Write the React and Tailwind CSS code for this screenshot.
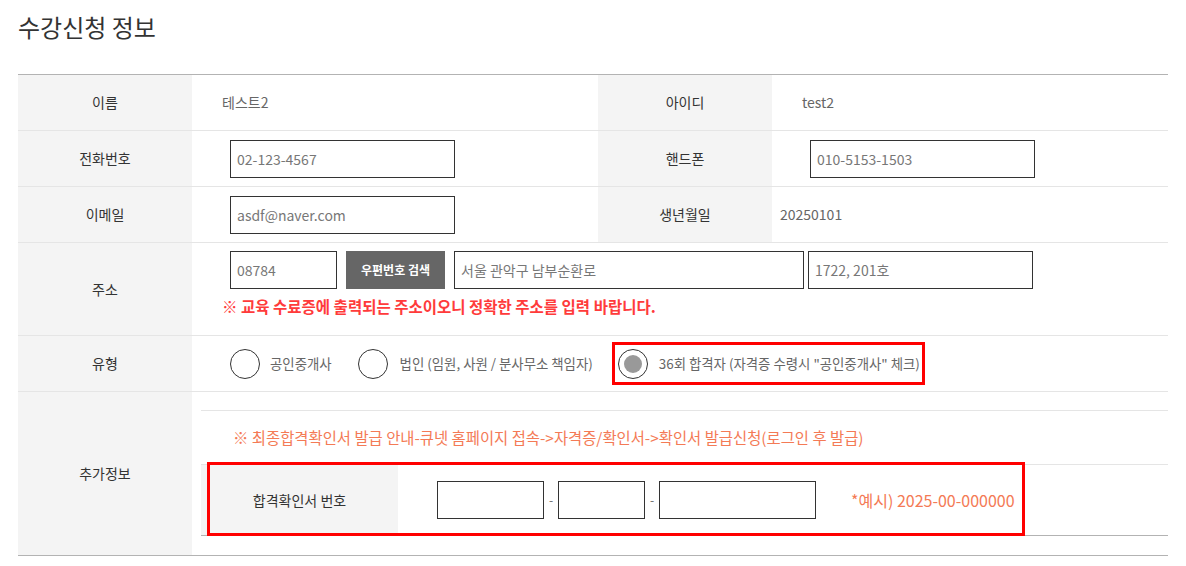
import React from "react";

const FONT = { fontFamily: '"Noto Sans CJK KR", "Noto Sans", sans-serif' };

function Label({ children, className = "" }) {
  return (
    <div
      className={
        "flex w-[174px] shrink-0 items-center justify-center bg-[#f4f4f4] text-[14px] text-[#333] " +
        className
      }
    >
      {children}
    </div>
  );
}

function Field({ value, w }) {
  return (
    <input
      readOnly
      defaultValue={value}
      className={"h-[38px] border border-[#333] bg-white px-[6px] text-[14px] text-[#777] outline-none " + w}
    />
  );
}

function Radio({ checked }) {
  return (
    <span className="flex h-[30px] w-[30px] shrink-0 items-center justify-center rounded-full border border-[#333] bg-white">
      {checked && <span className="h-[18px] w-[18px] rounded-full bg-[#999]" />}
    </span>
  );
}

export default function App() {
  return (
    <div className="min-h-screen bg-white px-[18px]" style={FONT}>
      <h2 className="pt-[11px] text-[24px] font-normal leading-[32px] text-[#333]">수강신청 정보</h2>

      <div className="mt-[31px] border-t border-[#b3b3b3]">
        {/* 이름 / 아이디 */}
        <div className="flex h-[56px] border-b border-[#e5e5e5]">
          <Label>이름</Label>
          <div className="flex w-[406px] items-center pl-[30px] text-[14px] text-[#666]">테스트2</div>
          <Label>아이디</Label>
          <div className="flex flex-1 items-center pl-[30px] text-[14px] text-[#666]">test2</div>
        </div>

        {/* 전화번호 / 핸드폰 */}
        <div className="flex h-[56px] border-b border-[#e5e5e5]">
          <Label>전화번호</Label>
          <div className="flex w-[406px] items-center pl-[38px]">
            <Field value="02-123-4567" w="w-[225px]" />
          </div>
          <Label>핸드폰</Label>
          <div className="flex flex-1 items-center pl-[38px]">
            <Field value="010-5153-1503" w="w-[225px]" />
          </div>
        </div>

        {/* 이메일 / 생년월일 */}
        <div className="flex h-[56px] border-b border-[#e5e5e5]">
          <Label>이메일</Label>
          <div className="flex w-[406px] items-center pl-[38px]">
            <Field value="asdf@naver.com" w="w-[225px]" />
          </div>
          <Label>생년월일</Label>
          <div className="flex flex-1 items-center pl-[8px] text-[14px] text-[#666]">20250101</div>
        </div>

        {/* 주소 */}
        <div className="flex h-[93px] border-b border-[#e5e5e5]">
          <Label>주소</Label>
          <div className="flex flex-1 flex-col pl-[30px] pt-[8px]">
            <div className="ml-[8px] flex items-center">
              <Field value="08784" w="w-[107px]" />
              <button className="ml-[9px] h-[38px] w-[99px] bg-[#666] text-[12px] font-bold text-white">
                우편번호 검색
              </button>
              <div className="ml-[9px]">
                <Field value="서울 관악구 남부순환로" w="w-[350px]" />
              </div>
              <div className="ml-[4px]">
                <Field value="1722, 201호" w="w-[225px]" />
              </div>
            </div>
            <p className="mt-[7px] text-[15.5px] font-bold leading-[20px] text-[#ff3b3b]">
              ※ 교육 수료증에 출력되는 주소이오니 정확한 주소를 입력 바랍니다.
            </p>
          </div>
        </div>

        {/* 유형 */}
        <div className="flex h-[56px] border-b border-[#e5e5e5]">
          <Label>유형</Label>
          <div className="flex flex-1 items-center pl-[38px] text-[13.4px] text-[#666]">
            <label className="flex items-center gap-[10px]">
              <Radio />
              <span>공인중개사</span>
            </label>
            <label className="ml-[26px] flex items-center gap-[12px]">
              <Radio />
              <span>법인 (임원, 사원 / 분사무소 책임자)</span>
            </label>
            <label className="relative ml-[25px] flex items-center gap-[11px]">
              <Radio checked />
              <span>36회 합격자 (자격증 수령시 "공인중개사" 체크)</span>
              <span className="pointer-events-none absolute -bottom-[6px] -left-[6px] -right-[5px] -top-[7px] border-[3px] border-[#ff0000]" />
            </label>
          </div>
        </div>

        {/* 추가정보 */}
        <div className="flex h-[164px] border-b border-[#b3b3b3]">
          <Label>추가정보</Label>
          <div className="flex flex-1 flex-col pl-[9px] pt-[18px]">
            <div className="border-t border-[#e5e5e5]">
              <div className="flex h-[54px] items-center border-b border-[#e5e5e5] pl-[32px] text-[15.4px] text-[#f47a55]">
                ※ 최종합격확인서 발급 안내-큐넷 홈페이지 접속-&gt;자격증/확인서-&gt;확인서 발급신청(로그인 후 발급)
              </div>
              <div className="relative flex h-[71px] border-b border-[#b3b3b3]">
                <div className="flex w-[197px] items-center justify-center bg-[#f4f4f4] text-[14px] text-[#333]">
                  합격확인서 번호
                </div>
                <div className="flex flex-1 items-center pl-[39px] text-[14px] text-[#666]">
                  <Field value="" w="w-[107px]" />
                  <span className="w-[14px] text-center text-[12px]">-</span>
                  <Field value="" w="w-[87px]" />
                  <span className="w-[14px] text-center text-[12px]">-</span>
                  <Field value="" w="w-[157px]" />
                  <span className="ml-[35px] text-[16px] text-[#f47a55]">*예시) 2025-00-000000</span>
                </div>
                <span className="pointer-events-none absolute left-[6px] top-[-3px] h-[74px] w-[818px] border-[3px] border-[#ff0000]" />
              </div>
            </div>
          </div>
        </div>
      </div>
    </div>
  );
}
